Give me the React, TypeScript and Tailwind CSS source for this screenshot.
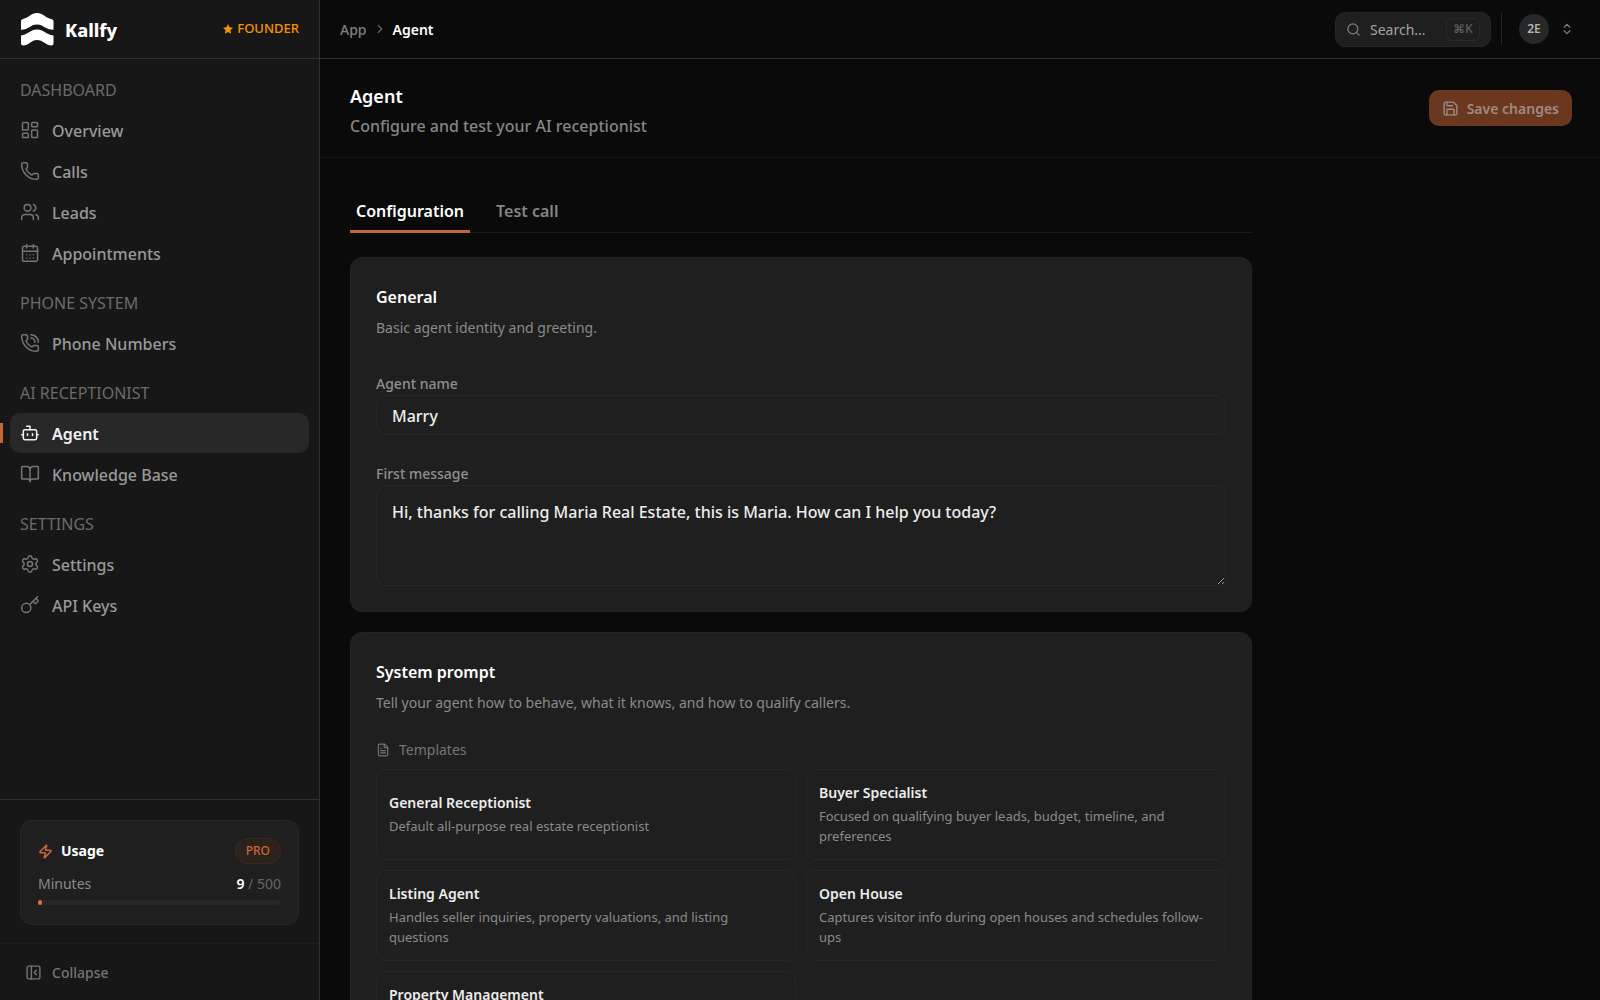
import { useState } from 'react';
import {
  BookOpen,
  Bot,
  CalendarDays,
  ChevronRight,
  ChevronsUpDown,
  FileText,
  Key,
  LayoutDashboard,
  PanelLeftClose,
  Phone,
  PhoneCall,
  Save,
  Search,
  Settings,
  Users,
  Zap,
} from 'lucide-react';

const sections = [
  {
    title: 'Dashboard',
    items: [
      { label: 'Overview', icon: LayoutDashboard },
      { label: 'Calls', icon: Phone },
      { label: 'Leads', icon: Users },
      { label: 'Appointments', icon: CalendarDays },
    ],
  },
  {
    title: 'Phone System',
    items: [{ label: 'Phone Numbers', icon: PhoneCall }],
  },
  {
    title: 'AI Receptionist',
    items: [
      { label: 'Agent', icon: Bot, active: true },
      { label: 'Knowledge Base', icon: BookOpen },
    ],
  },
  {
    title: 'Settings',
    items: [
      { label: 'Settings', icon: Settings },
      { label: 'API Keys', icon: Key },
    ],
  },
];

const templates = [
  { name: 'General Receptionist', text: 'Default all-purpose real estate receptionist' },
  { name: 'Buyer Specialist', text: 'Focused on qualifying buyer leads, budget, timeline, and preferences' },
  { name: 'Listing Agent', text: 'Handles seller inquiries, property valuations, and listing questions' },
  { name: 'Open House', text: 'Captures visitor info during open houses and schedules follow-ups' },
  { name: 'Property Management', text: 'Handles tenant inquiries, maintenance requests, and rental questions' },
];

function Logo() {
  return (
    <svg viewBox="0 0 34 34" className="h-[34px] w-[34px]" fill="#fff">
      <path d="M1 9Q1 7.500 3 7C9 5.500 11 1 17 1s8 4.500 14 6Q33.500 7.500 33.500 9V17.800C25 17.800 24 12.500 17 12.500S9 17.800 1 17.800Z" />
      <path d="M1 23.500C8 22.500 10 17.500 17 17.500S26 22.500 33.500 23.500V31.500Q33.500 33.500 31.500 33.500C26 33.500 23 28 17 28S9 33.500 3 33.500Q1 33.500 1 31.500Z" />
    </svg>
  );
}

function Sidebar() {
  return (
    <aside className="flex w-80 shrink-0 flex-col border-r border-[#303030] bg-[#171717]">
      <div className="flex h-[59px] items-center border-b border-[#303030] px-5">
        <Logo />
        <span className="ml-[11px] pt-[2px] text-lg font-extrabold text-white">Kallfy</span>
        <span className="ml-auto flex items-center gap-1 text-[13px] font-medium text-[#f59300]">
          <svg viewBox="0 0 20 20" className="h-[10px] w-[10px]" fill="currentColor">
            <path d="M10 0l3 6.600 7 .8-5.200 4.900 1.400 7.200L10 16l-6.200 3.500 1.400-7.200L0 7.400l7-.8z" />
          </svg>
          FOUNDER
        </span>
      </div>

      <nav className="flex flex-1 flex-col gap-5 px-[10px] pt-[21px]">
        {sections.map((section) => (
          <div key={section.title}>
            <h2 className="px-[10px] text-base leading-5 text-[#6b6b6b] uppercase">{section.title}</h2>
            <div className="mt-[10px] flex flex-col gap-px">
              {section.items.map(({ label, icon: Icon, active }: any) => (
                <a
                  key={label}
                  href="#"
                  className={
                    active
                      ? 'relative flex h-10 items-center gap-3 rounded-[10px] bg-[#282828] px-[10px] font-semibold text-[#f2f2f2]'
                      : 'flex h-10 items-center gap-3 rounded-[10px] px-[10px] font-medium text-[#999]'
                  }
                >
                  {active && <span className="absolute top-[10px] -left-[10px] h-5 w-[3px] bg-[#c4663a]" />}
                  <Icon size={20} strokeWidth={1.8} className={active ? '' : 'text-[#757575]'} />
                  <span className="pt-[2px]">{label}</span>
                </a>
              ))}
            </div>
          </div>
        ))}
      </nav>

      <div className="border-t border-[#303030] px-5 pt-5 pb-[18px]">
        <div className="rounded-xl border border-[#272727] bg-[#1f1f1f] px-[17px] pt-[17px] pb-[19px]">
          <div className="flex items-center">
            <Zap size={15} strokeWidth={2.5} className="text-[#c4663a]" />
            <span className="ml-2 text-sm leading-6 font-bold text-white">Usage</span>
            <span className="ml-auto rounded-full border border-[#3d281e] bg-[#2d211b] px-[10px] text-xs leading-6 font-medium text-[#c4663a]">
              PRO
            </span>
          </div>
          <div className="mt-2 flex justify-between text-sm leading-6 text-[#8a8a8a]">
            <span>Minutes</span>
            <span className="text-[#666]">
              <span className="font-semibold text-white">9</span> / 500
            </span>
          </div>
          <div className="mt-1 h-[5px] rounded-full bg-[#262626]">
            <div className="h-[5px] rounded-full bg-[#d8703f]" style={{ width: `${(9 / 500) * 100}%` }} />
          </div>
        </div>
      </div>

      <div className="border-t border-[#1d1d1d] p-2">
        <button className="flex h-10 items-center gap-[10px] px-[17px] text-sm font-medium text-[#757575]">
          <PanelLeftClose size={17} strokeWidth={2} />
          <span className="pt-[2px]">Collapse</span>
        </button>
      </div>
    </aside>
  );
}

function TopBar() {
  return (
    <header className="flex h-[59px] shrink-0 items-center border-b border-[#303030] pr-[26px] pl-5">
      <a href="#" className="pt-[2px] text-sm font-medium text-[#808080]">
        App
      </a>
      <ChevronRight size={14} className="mx-[6px] text-[#666]" />
      <span className="pt-[2px] text-sm font-semibold text-white">Agent</span>

      <button className="ml-auto flex h-[35px] w-[156px] items-center rounded-[10px] border border-[#262626] bg-[#1f1f1f] px-[10px] text-sm text-[#a3a3a3]">
        <Search size={15} className="text-[#808080]" />
        <span className="ml-[9px] pt-[2px]">Search...</span>
        <kbd className="ml-auto flex h-[23px] w-[34px] items-center justify-center rounded-md border border-[#2a2a2a] font-[inherit] text-xs text-[#666]">
          ⌘K
        </kbd>
      </button>
      <div className="mx-[10px] h-8 border-l border-[#242424]" />
      <button className="ml-[7px] flex items-center gap-[11px]">
        <span className="flex h-[30px] w-[30px] items-center justify-center rounded-full bg-[#282828] text-xs font-semibold text-[#b3b3b3]">
          2E
        </span>
        <ChevronsUpDown size={14} className="text-[#808080]" />
      </button>
    </header>
  );
}

function Card({ title, text, children }: { title: string; text: string; children: React.ReactNode }) {
  return (
    <section className="rounded-xl border border-[#242424] bg-[#1f1f1f] px-[25px] pt-[27px] pb-[25px]">
      <h2 className="text-base leading-6 font-semibold text-white">{title}</h2>
      <p className="mt-[7px] text-sm leading-6 text-[#8a8a8a]">{text}</p>
      {children}
    </section>
  );
}

export default function App() {
  const [tab, setTab] = useState('Configuration');

  return (
    <div className="flex h-screen overflow-hidden bg-[#0a0a0a] font-['Noto_Sans',sans-serif] text-base">
      <Sidebar />
      <div className="flex min-w-0 flex-1 flex-col">
        <TopBar />
        <div className="flex shrink-0 items-start justify-between border-b border-[#151515] pt-[23px] pr-[28px] pb-[19px] pl-[30px]">
          <div>
            <h1 className="text-lg leading-7 font-semibold text-white">Agent</h1>
            <p className="mt-1 text-base leading-6 font-medium text-[#858585]">
              Configure and test your AI receptionist
            </p>
          </div>
          <button className="mt-2 flex h-9 items-center gap-2 rounded-[10px] bg-[#6b371f] px-[13px] text-sm font-semibold text-[#9c8b82]">
            <Save size={17} />
            <span className="pt-[2px]">Save changes</span>
          </button>
        </div>

        <main className="flex-1 overflow-hidden px-[30px] pt-[29px]">
          <div className="max-w-[902px]">
            <div className="flex gap-3 border-b border-[#181818]">
              {['Configuration', 'Test call'].map((name) => (
                <button
                  key={name}
                  onClick={() => setTab(name)}
                  className={
                    tab === name
                      ? '-mb-px border-b-[3px] border-[#c4663a] px-[6px] pt-3 pb-[7px] font-semibold text-white'
                      : '-mb-px border-b-[3px] border-transparent px-[14px] pt-3 pb-[7px] font-semibold text-[#858585]'
                  }
                >
                  {name}
                </button>
              ))}
            </div>

            <div className="mt-6 flex flex-col gap-5">
              <Card title="General" text="Basic agent identity and greeting.">
                <label htmlFor="name" className="mt-[34px] block text-sm leading-5 font-medium text-[#8f8f8f]">
                  Agent name
                </label>
                <input
                  id="name"
                  defaultValue="Marry"
                  className="mt-px block h-10 w-full rounded-[10px] border border-[#272727] bg-transparent px-[15px] pt-[2px] font-medium text-[#ededed] outline-none"
                />
                <label htmlFor="message" className="mt-[29px] block text-sm leading-5 font-medium text-[#8f8f8f]">
                  First message
                </label>
                <textarea
                  id="message"
                  defaultValue="Hi, thanks for calling Maria Real Estate, this is Maria. How can I help you today?"
                  className="mt-px block h-[101px] w-full rounded-[10px] border border-[#272727] bg-transparent px-[15px] py-[14px] leading-6 font-medium text-[#ededed] outline-none"
                />
              </Card>

              <Card title="System prompt" text="Tell your agent how to behave, what it knows, and how to qualify callers.">
                <div className="mt-[23px] flex items-center gap-[9px] text-sm leading-6 text-[#757575]">
                  <FileText size={14} />
                  Templates
                </div>
                <div className="mt-[7px] grid grid-cols-2 gap-[10px]">
                  {templates.map((template) => (
                    <button
                      key={template.name}
                      className="h-[91px] rounded-[10px] border border-[#272727] px-3 text-left"
                    >
                      <span className="block pb-[3px] text-sm leading-5 font-semibold text-[#ededed]">
                        {template.name}
                      </span>
                      <span className="block text-[13px] leading-5 text-[#8a8a8a]">{template.text}</span>
                    </button>
                  ))}
                </div>
              </Card>
            </div>
          </div>
        </main>
      </div>
    </div>
  );
}
